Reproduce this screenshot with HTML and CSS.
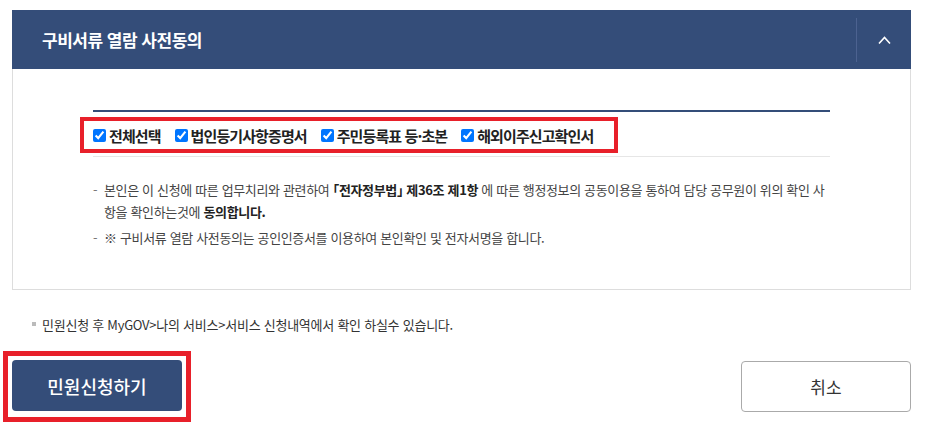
FILE: index.html
```html
<!DOCTYPE html>
<html lang="ko">
<head>
  <meta charset="UTF-8">
  <meta name="viewport" content="width=device-width, initial-scale=1.0">
  <title>구비서류 열람 사전동의</title>
  <link rel="stylesheet" href="styles.css">
</head>
<body>
  <div class="wrap">
    <section class="panel">
      <div class="panel-head">
        <h2>구비서류 열람 사전동의</h2>
        <button class="toggle" aria-label="접기">
          <svg width="13" height="8" viewBox="0 0 13 8"><path d="M1 7.5 L6.5 1.5 L12 7.5" fill="none" stroke="#fff" stroke-width="1.6"/></svg>
        </button>
      </div>
      <div class="panel-body">
        <div class="check-row">
          <div class="check-group">
            <label><input type="checkbox" checked>전체선택</label>
            <label><input type="checkbox" checked>법인등기사항증명서</label>
            <label><input type="checkbox" checked>주민등록표 등·초본</label>
            <label><input type="checkbox" checked>해외이주신고확인서</label>
          </div>
        </div>
        <ul class="desc">
          <li>본인은 이 신청에 따른 업무치리와 관련하여 <b>「전자정부법」 제36조 제1항</b> 에 따른 행정정보의 공동이용을 통하여 담당 공무원이 위의 확인 사항을 확인하는것에 <b>동의합니다.</b></li>
          <li>※ 구비서류 열람 사전동의는 공인인증서를 이용하여 본인확인 및 전자서명을 합니다.</li>
        </ul>
      </div>
    </section>

    <p class="note">민원신청 후 MyGOV&gt;나의 서비스&gt;서비스 신청내역에서 확인 하실수 있습니다.</p>

    <div class="actions">
      <span class="mark">
        <button class="btn-primary">민원신청하기</button>
      </span>
      <button class="btn-cancel">취소</button>
    </div>
  </div>
</body>
</html>
```

FILE: styles.css
```css
body {
  margin: 0;
  padding: 0;
  background: #fff;
  color: #333;
  font-family: "Noto Sans CJK KR", "Noto Sans", sans-serif;
}
.wrap {
  width: 899px;
  margin-left: 12px;
  padding-top: 10px;
}
.panel-head {
  display: flex;
  align-items: center;
  height: 59px;
  background-color: #344d79;
  padding-left: 30px;
}
.panel-head h2 {
  flex: 1;
  margin: 0;
  color: #fff;
  font-size: 17px;
  font-weight: 700;
  letter-spacing: -0.5px;
}
.toggle {
  width: 55px;
  height: 44px;
  border: none;
  border-left: 1px solid #4c6290;
  background: none;
  padding: 0;
  display: flex;
  align-items: center;
  justify-content: center;
  cursor: pointer;
}
.panel-body {
  border: 1px solid #ddd;
  border-top: none;
  padding: 41px 80px 40px;
}
.check-row {
  border-top: 2px solid #344d79;
  padding-top: 9px;
  padding-bottom: 7px;
  border-bottom: 1px solid #e6e6e6;
}
.check-group {
  display: inline-flex;
  align-items: center;
  height: 28px;
  margin-left: -9px;
  padding: 0 21px 0 9px;
  outline: 4px solid #e8202a;
}
.check-group label {
  display: flex;
  align-items: center;
  margin-right: 14px;
  font-size: 15px;
  font-weight: 700;
  color: #222;
  letter-spacing: -0.9px;
  font-feature-settings: "halt";
}
.check-group label:last-child {
  margin-right: 0;
}
.check-group input {
  width: 13px;
  height: 13px;
  margin: 0 3px 0 0;
}
.desc {
  list-style: none;
  margin: 22px 0 0;
  padding: 0;
}
.desc li {
  padding-left: 11px;
  font-size: 13px;
  line-height: 22px;
  color: #444;
  letter-spacing: -0.35px;
  word-break: break-all;
  margin-bottom: 4px;
}
.desc li:last-child {
  margin-bottom: 0;
}
.desc li::before {
  content: "-";
  display: inline-block;
  width: 11px;
  margin-left: -11px;
  color: #777;
}
.desc b {
  color: #222;
  font-feature-settings: "halt";
}
.note {
  margin: 25px 0 0;
  padding-left: 20px;
  font-size: 13px;
  line-height: 20px;
  color: #333;
  letter-spacing: -0.25px;
}
.note::before {
  content: "";
  display: inline-block;
  width: 4px;
  height: 4px;
  background: #bbb;
  margin-right: 6px;
  vertical-align: middle;
  position: relative;
  top: -2px;
}
.actions {
  display: flex;
  align-items: center;
  justify-content: space-between;
  margin-top: 16px;
  margin-left: -9px;
}
.mark {
  display: inline-flex;
  border: 5px solid #e8202a;
  padding: 4px 4px 6px;
}
.actions button {
  height: 51px;
  width: 170px;
  border-radius: 4px;
  font-family: inherit;
  cursor: pointer;
}
.btn-primary {
  background-color: #344d79;
  color: #fff;
  border: none;
  font-size: 18px;
  font-weight: 500;
}
.btn-cancel {
  background: #fff;
  color: #333;
  border: 1px solid #aaa;
  font-size: 17px;
}
```
